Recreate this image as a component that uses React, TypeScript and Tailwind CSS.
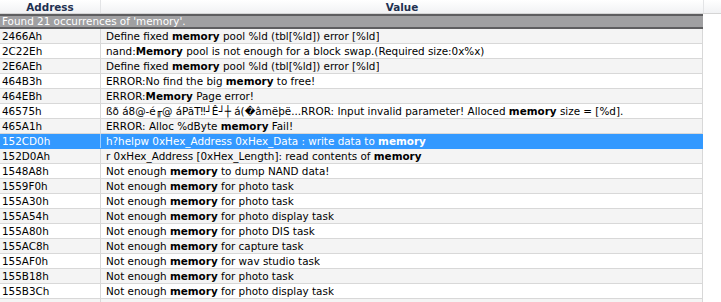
import React from "react";

type Row = { addr: string; parts: [string, string, string] | [string]; };

const rows: Row[] = [
  { addr: "2466Ah", parts: ["Define fixed ", "memory", " pool %ld (tbl[%ld]) error [%ld]"] },
  { addr: "2C22Eh", parts: ["nand:", "Memory", " pool is not enough for a block swap.(Required size:0x%x)"] },
  { addr: "2E6AEh", parts: ["Define fixed ", "memory", " pool %ld (tbl[%ld]) error [%ld]"] },
  { addr: "464B3h", parts: ["ERROR:No find the big ", "memory", " to free!"] },
  { addr: "464EBh", parts: ["ERROR:", "Memory", " Page error!"] },
  { addr: "46575h", parts: ["ßð á8@-é╓@ áPãT‼┘Ê┘┼ á(\uFFFDâmëþë...RROR: Input invalid parameter! Alloced ", "memory", " size = [%d]."] },
  { addr: "465A1h", parts: ["ERROR: Alloc %dByte ", "memory", " Fail!"] },
  { addr: "152CD0h", parts: ["h?helpw 0xHex_Address 0xHex_Data : write data to ", "memory", ""] },
  { addr: "152D0Ah", parts: ["r 0xHex_Address [0xHex_Length]: read contents of ", "memory", ""] },
  { addr: "1548A8h", parts: ["Not enough ", "memory", " to dump NAND data!"] },
  { addr: "1559F0h", parts: ["Not enough ", "memory", " for photo task"] },
  { addr: "155A30h", parts: ["Not enough ", "memory", " for photo task"] },
  { addr: "155A54h", parts: ["Not enough ", "memory", " for photo display task"] },
  { addr: "155A80h", parts: ["Not enough ", "memory", " for photo DIS task"] },
  { addr: "155AC8h", parts: ["Not enough ", "memory", " for capture task"] },
  { addr: "155AF0h", parts: ["Not enough ", "memory", " for wav studio task"] },
  { addr: "155B18h", parts: ["Not enough ", "memory", " for photo task"] },
  { addr: "155B3Ch", parts: ["Not enough ", "memory", " for photo display task"] },
  { addr: "", parts: [""] },
];

const SELECTED = 7;

export default function App() {
  return (
    <div
      className="w-[721px] h-[302px] overflow-hidden bg-white text-[10.4px] leading-[14px] text-black"
      style={{ fontFamily: '"DejaVu Sans", Tahoma, sans-serif' }}
    >
      {/* header */}
      <div className="flex h-[14px] bg-gradient-to-b from-white to-[#f1f2f4] border-b border-[#d5d5d5]">
        <div className="w-[101px] border-r border-[#e3e4e6] text-center font-bold text-[#1e3050]">Address</div>
        <div className="w-[603px] border-r border-[#e3e4e6] text-center font-bold text-[#1e3050]">Value</div>
        <div className="flex-1" />
      </div>

      {/* group row */}
      <div className="w-[703px] h-[15px] bg-[#a0a0a2] border-y-2 border-[#5e5e60] text-white leading-[11px] pl-[2px] whitespace-nowrap">
        Found 21 occurrences of 'memory'.
      </div>

      {rows.map((r, i) => {
        const sel = i === SELECTED;
        const bg = sel ? "bg-[#3399ff] text-white" : i % 2 === 0 ? "bg-[#f4f4f4]" : "bg-white";
        return (
          <div key={i} className={`flex w-[703px] h-[15px] border-b border-r ${sel ? "border-[#3399ff]" : "border-[#d8d8d8]"} ${bg}`}>
            <div className={`w-[101px] shrink-0 pl-[2px] border-r ${sel ? "border-[#9ccdff]" : "border-[#d8d8d8]"}`}>{r.addr}</div>
            <div className="pl-[5px] whitespace-nowrap overflow-hidden">
              {r.parts[0]}
              {r.parts.length > 1 && <b>{r.parts[1]}</b>}
              {r.parts.length > 2 && r.parts[2]}
            </div>
          </div>
        );
      })}
    </div>
  );
}
